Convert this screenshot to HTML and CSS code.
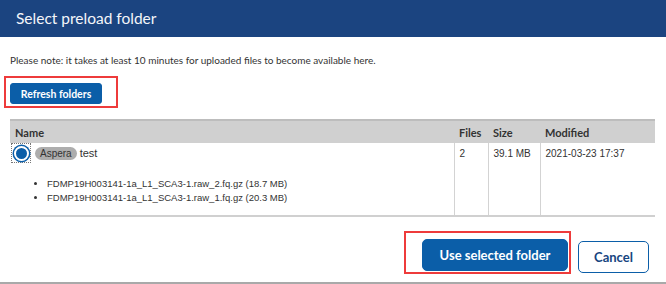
FILE: index.html
```html
<!DOCTYPE html>
<html lang="en">
<head>
    <meta charset="UTF-8">
    <title>Select preload folder</title>
    <link rel="stylesheet" href="styles.css">
</head>
<body>
    <div class="dialog">
        <div class="dialog-header">Select preload folder</div>

        <div class="dialog-body">
            <p class="note">Please note: it takes at least 10 minutes for uploaded files to become available here.</p>

            <!-- highlighted refresh button -->
            <div class="mark mark-refresh">
                <button class="btn btn-primary btn-small">Refresh folders</button>
            </div>

            <table class="folders">
                <thead>
                    <tr>
                        <th class="col-name">Name</th>
                        <th class="col-files">Files</th>
                        <th class="col-size">Size</th>
                        <th class="col-mod">Modified</th>
                    </tr>
                </thead>
                <tbody>
                    <tr>
                        <td class="col-name">
                            <div class="folder-line">
                                <span class="radio-focus"><span class="radio"></span></span>
                                <span class="badge">Aspera</span>
                                <span class="folder-name">test</span>
                            </div>
                            <ul class="files">
                                <li>FDMP19H003141-1a_L1_SCA3-1.raw_2.fq.gz (18.7 MB)</li>
                                <li>FDMP19H003141-1a_L1_SCA3-1.raw_1.fq.gz (20.3 MB)</li>
                            </ul>
                        </td>
                        <td class="col-files">2</td>
                        <td class="col-size">39.1 MB</td>
                        <td class="col-mod">2021-03-23 17:37</td>
                    </tr>
                </tbody>
            </table>
        </div>

        <div class="dialog-footer">
            <div class="mark mark-use">
                <button class="btn btn-primary btn-large">Use selected folder</button>
            </div>
            <button class="btn btn-outline btn-large">Cancel</button>
        </div>
    </div>
</body>
</html>
```

FILE: styles.css
```css
body {
    margin: 0;
    background: #fff;
    font-family: "Liberation Sans", Arial, sans-serif;
    color: #333;
}

.dialog {
    height: 284px;
    box-sizing: border-box;
    border-bottom: 2px solid #a9a9a9;
    display: flex;
    flex-direction: column;
}

.dialog-header {
    height: 37px;
    background-color: #1b4480;
    color: #f4f6fa;
    font-family: "Lato", sans-serif;
    font-size: 15.5px;
    line-height: 37px;
    padding-left: 16px;
}

.dialog-body {
    padding: 0 11px 0 10px;
}

.note {
    font-family: "Lato", sans-serif;
    font-size: 10px;
    margin: 17px 0 0 0;
    line-height: 13px;
    color: #333;
}

.mark {
    border: 2px solid #ee3b3b;
    display: inline-block;
}

.mark-refresh {
    margin: 9px 0 0 -6px;
    padding: 5px 14px 2px 4px;
}

.btn {
    font-family: "Lato", sans-serif;
    font-weight: bold;
    border-radius: 3px;
    cursor: pointer;
    display: block;
}

.btn-primary {
    background-color: #0b5ea8;
    color: #fff;
    border: 1px solid #0b5ea8;
}

.btn-outline {
    background-color: #fff;
    color: #16457f;
    border: 1px solid #0b5ea8;
}

.btn-small {
    width: 92px;
    height: 21px;
    font-size: 10.5px;
    padding: 0;
}

.btn-large {
    height: 32px;
    font-size: 13px;
    padding: 0;
    border-radius: 5px;
}

.folders {
    margin-top: 11px;
    width: 645px;
    border-collapse: collapse;
    border-top: 2px solid #bdbdbd;
    border-bottom: 2px solid #d0d0d0;
    font-size: 10px;
}

.folders th {
    background-color: #d0d0d0;
    text-align: left;
    font-family: "Lato", sans-serif;
    font-weight: bold;
    font-size: 11px;
    color: #333;
    height: 22px;
    padding: 0 0 0 5px;
}

.folders td {
    vertical-align: top;
    padding: 5px 0 0 5px;
    height: 73px;
    box-sizing: border-box;
}

.folders td + td {
    border-left: 1px solid #d3d3d3;
}

.col-name { width: 439px; }
.col-files { width: 29px; }
.col-size { width: 47px; }

.folders td.col-name {
    padding: 0 0 0 1px;
}

.folder-line {
    display: flex;
    align-items: center;
    gap: 3px;
    height: 20px;
}

.radio-focus {
    width: 20px;
    height: 20px;
    border: 1px dotted #777;
    display: flex;
    align-items: center;
    justify-content: center;
    box-sizing: border-box;
}

.radio {
    width: 11px;
    height: 11px;
    border-radius: 50%;
    background: #0b5ea8;
    border: 2px solid #fff;
    box-shadow: 0 0 0 1.5px #0b5ea8;
}

.badge {
    background: #adadad;
    color: #333;
    font-size: 10px;
    border-radius: 7px;
    padding: 1px 5px;
    margin-left: 1px;
}

.folder-name {
    font-size: 11px;
}

.files {
    margin: 14px 0 0 0;
    padding-left: 36px;
    font-size: 9.5px;
    line-height: 14px;
    list-style: disc;
}

.dialog-footer {
    margin-top: auto;
    display: flex;
    justify-content: flex-end;
    align-items: flex-end;
    gap: 7px;
    padding: 0 17px 8px 0;
}

.mark-use {
    padding: 6px 1px 1px 16px;
}

.mark-use .btn {
    width: 146px;
}

.dialog-footer > .btn-outline {
    width: 71px;
    margin-bottom: 1px;
}
```
